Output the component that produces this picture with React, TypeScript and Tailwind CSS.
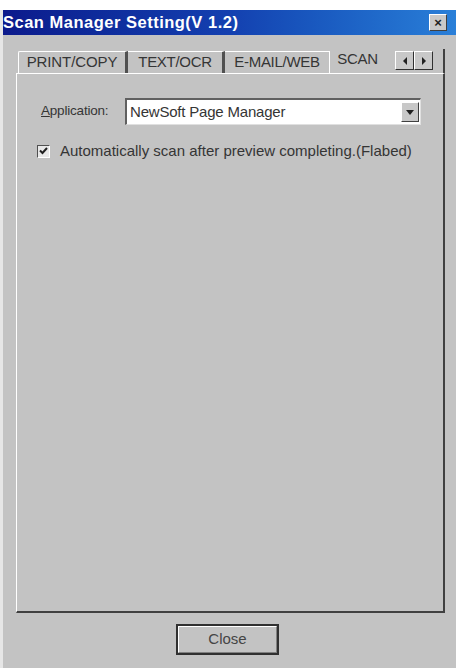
import React from "react";

export default function App() {
  const font = { fontFamily: '"Liberation Sans", Arial, sans-serif' };
  return (
    <div className="w-[456px] h-[668px] bg-white pt-[10px] overflow-hidden" style={font}>
      <div className="h-[658px] bg-[#c3c3c3] border-l-[3px] border-l-[#e6e6e6] flex flex-col">
        {/* Title bar */}
        <div className="h-[25px] flex items-center justify-between pl-[0px] pr-[9px] bg-gradient-to-r from-[#0c1a8c] via-[#1440b0] to-[#2a7fd8]">
          <span className="text-white font-bold text-[16.5px] tracking-[0.5px]">Scan Manager Setting(V 1.2)</span>
          <div className="w-[18px] h-[17px] bg-[#c8c8c8] border-t border-l border-t-white border-l-white border-b border-r border-b-[#404040] border-r-[#404040] flex items-center justify-center text-[13px] font-bold leading-none text-[#202020]">×</div>
        </div>
        {/* Tabs */}
        <div className="mt-[13px] ml-[15px] mr-[11px] h-[25px] flex items-end relative">
          <div className="h-[22px] w-[110px] flex items-center justify-center text-[15px] tracking-[-0.1px] text-[#353535] border-t border-l border-t-white border-l-white border-r-[3px] border-r-[#505050] rounded-tl-[2px]">PRINT/COPY</div>
          <div className="h-[22px] w-[97px] flex items-center justify-center text-[15px] tracking-[-0.3px] text-[#353535] border-t border-t-white border-r-[3px] border-r-[#505050]">TEXT/OCR</div>
          <div className="h-[22px] w-[105px] flex items-center justify-center text-[15px] tracking-[-0.3px] text-[#353535] border-t border-t-white border-r border-r-white">E-MAIL/WEB</div>
          <div className="h-[25px] w-[55px] flex items-start justify-center pt-[0px] text-[15px] tracking-[-0.3px] text-[#353535] bg-[#c3c3c3] relative z-10">SCAN</div>
          <div className="absolute right-[12px] top-[3px] flex z-20">
            <div className="w-[19px] h-[19px] bg-[#c8c8c8] border-t border-l border-t-white border-l-white border-b border-r border-b-[#303030] border-r-[#303030] flex items-center justify-center">
              <svg width="6" height="8" viewBox="0 0 6 8"><path d="M5 0 L1 4 L5 8 Z" fill="#202020" /></svg>
            </div>
            <div className="w-[19px] h-[19px] bg-[#c8c8c8] border-t border-l border-t-white border-l-white border-b border-r border-b-[#303030] border-r-[#303030] flex items-center justify-center">
              <svg width="6" height="8" viewBox="0 0 6 8"><path d="M1 0 L5 4 L1 8 Z" fill="#202020" /></svg>
            </div>
          </div>
          <div className="absolute right-0 top-[1px] bottom-0 w-[2px] bg-[#404040]"></div>
        </div>
        {/* Panel */}
        <div className="ml-[13px] mr-[11px] h-[540px] border-t border-l border-t-white border-l-white border-b-2 border-r-2 border-b-[#404040] border-r-[#404040] px-[22px] pt-[24px]">
          <div className="flex items-center">
            <span className="text-[13.5px] tracking-[-0.2px] text-[#353535] w-[86px] pl-[2px]"><span className="underline">A</span>pplication:</span>
            <div className="flex-1 h-[27px] bg-white border-t-2 border-l-2 border-t-[#606060] border-l-[#606060] border-b border-r border-b-[#e0e0e0] border-r-[#e0e0e0] flex items-center justify-between pl-[3px] pr-[1px]">
              <span className="text-[15px] tracking-[-0.2px] text-[#353535]">NewSoft Page Manager</span>
              <div className="w-[18px] h-[20px] bg-[#c8c8c8] border-t border-l border-t-white border-l-white border-b border-r border-b-[#404040] border-r-[#404040] flex items-center justify-center">
                <svg width="8" height="5" viewBox="0 0 8 5"><path d="M0 0 L8 0 L4 5 Z" fill="#202020" /></svg>
              </div>
            </div>
          </div>
          <div className="flex items-center mt-[15px] -ml-[2px]">
            <div className="w-[13px] h-[13px] bg-[#e8e8e8] border-t border-l border-t-[#505050] border-l-[#505050] border-b border-r border-b-white border-r-white flex items-center justify-center">
              <svg width="9" height="8" viewBox="0 0 9 8"><path d="M1 3.5 L3.5 6 L8 1" stroke="#202020" strokeWidth="2" fill="none" /></svg>
            </div>
            <span className="ml-[10px] text-[15px] tracking-[0px] text-[#353535]">Automatically scan after preview completing.(Flabed)</span>
          </div>
        </div>
        {/* Close button */}
        <div className="flex justify-center mt-[11px] pr-[4px]">
          <div className="w-[103px] h-[31px] border-2 border-[#303030] flex items-stretch">
            <div className="flex-1 border-t border-l border-t-white border-l-white border-b border-r border-b-[#808080] border-r-[#808080] flex items-center justify-center text-[15px] text-[#454545]">Close</div>
          </div>
        </div>
      </div>
    </div>
  );
}
